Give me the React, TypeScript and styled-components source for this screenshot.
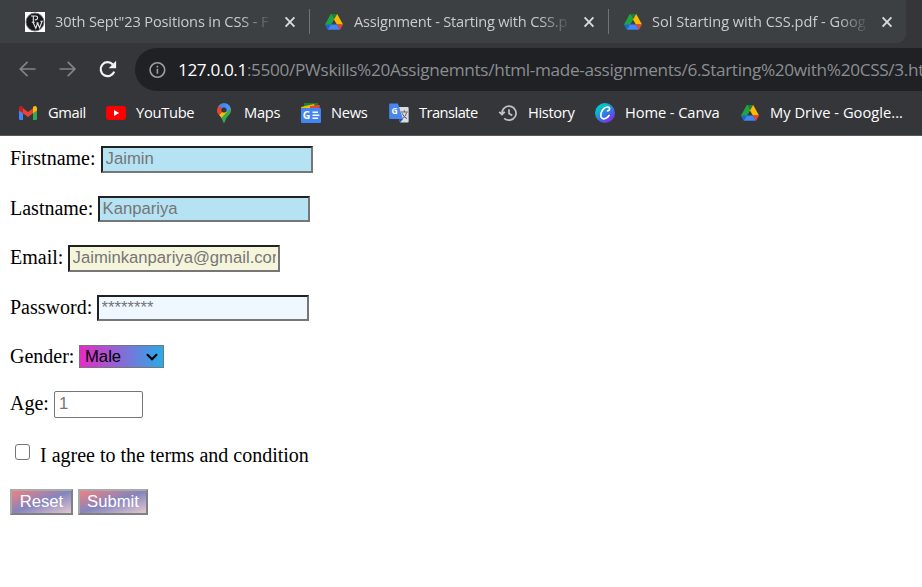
import React from "react";
import styled, { createGlobalStyle, css } from "styled-components";

const GlobalStyle = createGlobalStyle`
  * { box-sizing: border-box; }
  html, body { margin: 0; padding: 0; background: #fff; overflow: hidden; }
`;

const Window = styled.div`
  width: 922px;
  height: 587px;
  overflow: hidden;
  background: #fff;
`;

const Chrome = styled.header`
  height: 136px;
  background: #35363a;
  border-bottom: 1px solid #58595c;
  font-family: "Open Sans", "Noto Sans", sans-serif;
  overflow: hidden;
`;

const TabStrip = styled.div`
  display: flex;
  width: 906px;
  height: 43px;
  background: #3c4043;
  border-bottom-right-radius: 9px;
`;

const Tab = styled.div<{ $width: number; $pad: number; $divider?: boolean }>`
  display: flex;
  align-items: center;
  flex: none;
  width: ${(p) => p.$width}px;
  height: 43px;
  padding-left: ${(p) => p.$pad}px;
  ${(p) =>
    p.$divider &&
    css`
      background: linear-gradient(#707376, #707376) right 9px / 1px 25px no-repeat;
    `}
`;

const TabTitle = styled.span<{ $spacing: number; $gap: number }>`
  flex: none;
  width: 214px;
  margin-left: ${(p) => p.$gap}px;
  margin-right: 11px;
  padding-bottom: 1px;
  overflow: hidden;
  white-space: nowrap;
  font-size: 14.6px;
  line-height: 24px;
  letter-spacing: ${(p) => p.$spacing}px;
  color: #c9cccf;
  mask-image: linear-gradient(90deg, #000 185px, transparent 218px);
`;

const Toolbar = styled.div`
  display: flex;
  align-items: center;
  height: 53px;
  padding: 0 0 0 18px;
`;

const NavIcon = styled.svg`
  flex: none;
  width: 20px;
  height: 20px;
  margin-right: 20px;
  fill: none;
`;

const AddressBar = styled.div`
  display: flex;
  align-items: center;
  flex: none;
  width: 820px;
  height: 43px;
  margin-left: -3px;
  padding-left: 14px;
  border-radius: 22px;
  background: #202124;
`;

const Url = styled.span`
  margin-left: 9px;
  white-space: nowrap;
  font-size: 17.2px;
  line-height: 26px;
  letter-spacing: -0.33px;
  color: #8a8e92;
`;

const Host = styled.span`
  color: #fff;
  letter-spacing: -0.4px;
`;

const Bookmarks = styled.nav`
  display: flex;
  align-items: center;
  height: 34px;
  padding-left: 18px;
`;

const Bookmark = styled.div<{ $width: number }>`
  display: flex;
  align-items: center;
  flex: none;
  gap: 10px;
  width: ${(p) => p.$width}px;
`;

const BookmarkName = styled.span<{ $spacing: number }>`
  padding-bottom: 2px;
  font-size: 14.7px;
  line-height: 24px;
  letter-spacing: ${(p) => p.$spacing}px;
  white-space: nowrap;
  color: #fff;
`;

const Icon20 = styled.svg`
  flex: none;
  display: block;
  width: 20px;
  height: 20px;
`;

const Form = styled.form`
  padding: 10px 0 0 10px;
  font-family: "Liberation Serif", "Times New Roman", serif;
  font-size: 20px;
  color: #000;
`;

const Row = styled.div<{ $height: number }>`
  display: flex;
  align-items: flex-start;
  height: ${(p) => p.$height}px;
`;

const Label = styled.label<{ $width: number; $line?: number }>`
  flex: none;
  width: ${(p) => p.$width}px;
  line-height: ${(p) => p.$line ?? 24}px;
  white-space: nowrap;
`;

const controlFont = css`
  font-family: "Liberation Sans", Arial, sans-serif;
  font-size: 16.667px;
`;

const TextInput = styled.input<{ $bg: string; $height?: number }>`
  ${controlFont}
  width: 212px;
  height: ${(p) => p.$height ?? 26}px;
  margin: 0;
  padding: 0 2px 1px 2.6px;
  border: 2px solid;
  border-color: #212121 #767676 #767676 #212121;
  border-radius: 0;
  outline: none;
  background: ${(p) => p.$bg};
  &::placeholder { color: #757575; }
`;

const AgeInput = styled.input`
  ${controlFont}
  width: 89px;
  height: 27px;
  margin: 0;
  padding: 0 4px 1px;
  border: 1px solid #767676;
  border-radius: 2px;
  outline: none;
  &::placeholder { color: #757575; }
`;

const SelectBox = styled.div`
  display: grid;
  width: 85px;
  height: 23px;
  > * { grid-area: 1 / 1; }
`;

const Select = styled.select`
  ${controlFont}
  appearance: none;
  width: 85px;
  height: 23px;
  padding: 0 5px 1px;
  border: 1px solid #767676;
  border-radius: 0;
  background: linear-gradient(90deg, #e62bc5, #28abe8);
  color: #000;
`;

const Chevron = styled.svg`
  width: 12px;
  height: 8px;
  place-self: center end;
  margin-right: 6px;
  pointer-events: none;
`;

const Checkbox = styled.input`
  appearance: none;
  width: 15px;
  height: 16px;
  margin: 0 10px 0 5px;
  border: 1.5px solid #767676;
  border-radius: 3px;
  background: #fff;
`;

const Terms = styled.label`
  line-height: 22px;
`;

const Button = styled.button<{ $width: number }>`
  ${controlFont}
  width: ${(p) => p.$width}px;
  height: 26px;
  margin-right: 5px;
  padding: 0 0 1px;
  border: 2px solid;
  border-color: #a9a9a9 #808080 #808080 #a9a9a9;
  border-radius: 0;
  background: linear-gradient(to bottom right, #f08080, #8585bd 50%, #e3c8d0);
  color: #fff;
`;

const DriveIcon = () => (
  <Icon20 viewBox="0 0 20 20">
    <path d="M6.8 2h6.4l-3.1 5.5-3.3-5.5z" fill="#188038" />
    <path d="M6.8 2 1 12.5l3 5.3 6.2-10.3z" fill="#1ea446" />
    <path d="M13.2 2H6.8l6.1 10.5H19z" fill="#ffba00" />
    <path d="M6.8 2 10.1 7.5 13.2 2z" fill="#188038" />
    <path d="M7.1 12.5H1l3 5.3z" fill="#1967d2" />
    <path d="M7.1 12.5 4 17.8h12l-3.1-5.3z" fill="#4285f4" />
    <path d="M12.9 12.5H19l-3 5.3z" fill="#ea4335" />
  </Icon20>
);

const PwIcon = () => (
  <Icon20 viewBox="0 0 20 20">
    <path d="M0 0h20v20H0z" fill="#fff" />
    <circle cx="10" cy="10" r="9" fill="#15191c" stroke="#777" />
    <path d="M6 4h4.5c3.2 0 2.6 4.2-.8 3.8M8.3 4v6.2M6.8 10.2h3M8 10.2l2.8 6 1.8-5 2 4.6 2.4-6.3M11.3 11h2.4M15.3 9.3h2.6" fill="none" stroke="#e4e4e4" strokeWidth="1.1" />
  </Icon20>
);

const GmailIcon = () => (
  <Icon20 viewBox="0 0 20 20">
    <path d="M1 6h4v11H2.2Q1 17 1 15.8z" fill="#4285f4" />
    <path d="M15 6h4v9.8q0 1.2-1.2 1.2H15z" fill="#34a853" />
    <path d="M5 5.3 10 9l5-3.7v5L10 14l-5-3.7z" fill="#ea4335" />
    <path d="M1 5.3C1 3 3.4 2.4 5 4v6.3L1 7.4z" fill="#c5221f" />
    <path d="M19 5.3c0-2.3-2.4-2.9-4-1.3v6.3l4-2.9z" fill="#fbbc04" />
  </Icon20>
);

const YouTubeIcon = () => (
  <Icon20 viewBox="0 0 20 20">
    <rect y="3" width="20" height="14" rx="3.3" fill="#f00" />
    <path d="m8 7 5.2 3L8 13z" fill="#fff" />
  </Icon20>
);

const MapsIcon = () => (
  <Icon20 viewBox="0 0 20 20">
    <clipPath id="pin">
      <path d="M10 .3a6.8 6.8 0 0 0-6.8 6.9c0 4.8 4.6 5.7 5.9 11.2.4 1.6 1.4 1.6 1.8 0 1.3-5.5 5.9-6.4 5.9-11.2A6.8 6.8 0 0 0 10 .3z" />
    </clipPath>
    <g clipPath="url(#pin)">
      <path d="M0 0h20v20H0z" fill="#34a853" />
      <path d="M0 20V10l4 3 11.5-13H20v5L6 17z" fill="#fbbc04" />
      <path d="M12.5 9.5 18 3.5V20H7.2l-1-4z" fill="#34a853" />
      <path d="M0 0h5l5 7-6.5 7L0 10z" fill="#ea4335" />
      <path d="M4.7 2.5 8 0h9l-.6 4L10 7.3z" fill="#4285f4" />
      <path d="m12 0 8 4-7.5 5L10 7z" fill="#4a90f5" />
    </g>
    <circle cx="10" cy="7" r="2.6" fill="#35363a" />
  </Icon20>
);

const Letter = styled.text`
  font-family: "Open Sans", sans-serif;
  font-weight: 700;
`;

const NewsIcon = () => (
  <Icon20 viewBox="0 0 20 20">
    <path d="M3 0h14v7H3z" fill="#188038" />
    <path d="m0 4 13-3 2 7H1z" fill="#fbbc04" />
    <path d="m9 3 10-1-1 6H9z" fill="#ea4335" />
    <rect y="5" width="20" height="15" rx="1.3" fill="#4285f4" />
    <Letter x="1.7" y="15.9" fontSize="10.5" fill="#fff">G</Letter>
    <path d="M11.5 9.2H17M11.5 12.2h6.8M11.5 15.2H17" stroke="#fff" strokeWidth="1.6" />
  </Icon20>
);

const TranslateIcon = () => (
  <Icon20 viewBox="0 0 20 20">
    <path d="M8 4h10.6q1 0 1 1v13.4q0 1-1 1H11z" fill="#dadce0" />
    <path d="M12 9h6.8M15.4 7.2V9M13 10.2q1.7 4 5 5.5M17.7 9.5q-1 4.5-4.7 6.5" fill="none" stroke="#5f6368" strokeWidth="1" />
    <path d="M1.2.5h7.7L14 16H1.2q-1 0-1-1V1.5q0-1 1-1z" fill="#4a86ed" />
    <path d="M10 16h4l-2.8 3.5z" fill="#294fa8" />
    <Letter x="2.4" y="11" fontSize="8.5" fill="#fff">G</Letter>
  </Icon20>
);

const HistoryIcon = () => (
  <Icon20 viewBox="0 0 20 20" fill="none" stroke="#bfc2c6" strokeWidth="1.7">
    <path d="M4 10.2a7 7 0 1 1 2.2 5.1M1.2 8.8 4 11.5l2.8-2.7M11 6.2v4.4l3.3 2" />
  </Icon20>
);

const CanvaIcon = () => (
  <Icon20 viewBox="0 0 20 20">
    <linearGradient id="canva" x1=".15" y1=".1" x2=".8" y2=".95">
      <stop offset=".15" stopColor="#00c4cc" />
      <stop offset=".6" stopColor="#3a70e4" />
      <stop offset="1" stopColor="#8626ed" />
    </linearGradient>
    <circle cx="10" cy="10" r="10" fill="url(#canva)" />
    <path d="M12.6 7.8c2.8-.5 2.6-4-.4-3.8-3.4.2-6.4 4.4-6.4 8.2 0 5 5.6 4.5 8.3.2" fill="none" stroke="#fff" strokeWidth="1.7" strokeLinecap="round" />
  </Icon20>
);

const CloseIcon = () => (
  <Icon20 viewBox="0 0 20 20">
    <path d="m5.6 5.4 8.8 9.2m0-9.2-8.8 9.2" stroke="#d8dadc" strokeWidth="1.9" />
  </Icon20>
);

const bookmarks = [
  { name: "Gmail", icon: GmailIcon, width: 88, spacing: -0.4 },
  { name: "YouTube", icon: YouTubeIcon, width: 108, spacing: -0.3 },
  { name: "Maps", icon: MapsIcon, width: 87, spacing: -0.3 },
  { name: "News", icon: NewsIcon, width: 88, spacing: -0.3 },
  { name: "Translate", icon: TranslateIcon, width: 109, spacing: -0.55 },
  { name: "History", icon: HistoryIcon, width: 97, spacing: -0.35 },
  { name: "Home - Canva", icon: CanvaIcon, width: 145, spacing: -0.1 },
  { name: "My Drive - Google...", icon: DriveIcon, width: 180, spacing: 0.02 },
];

export default function App() {
  return (
    <Window>
      <GlobalStyle />
      <Chrome>
        <TabStrip>
          <Tab $width={310} $pad={25} $divider>
            <PwIcon />
            <TabTitle $gap={10} $spacing={-0.15}>30th Sept"23 Positions in CSS - F</TabTitle>
            <CloseIcon />
          </Tab>
          <Tab $width={299} $pad={14} $divider>
            <DriveIcon />
            <TabTitle $gap={10} $spacing={-0.2}>Assignment - Starting with CSS.pdf</TabTitle>
            <CloseIcon />
          </Tab>
          <Tab $width={297} $pad={14}>
            <DriveIcon />
            <TabTitle $gap={9} $spacing={-0.02}>Sol Starting with CSS.pdf - Goog</TabTitle>
            <CloseIcon />
          </Tab>
        </TabStrip>
        <Toolbar>
          <NavIcon viewBox="0 0 20 20" stroke="#828487" strokeWidth="1.7">
            <path d="M17.5 9H2.5M9.5 1.8 2.3 9l7.2 7.2" />
          </NavIcon>
          <NavIcon viewBox="0 0 20 20" stroke="#828487" strokeWidth="1.7">
            <path d="M1.5 9h15M9.7 1.8l7.2 7.2-7.2 7.2" />
          </NavIcon>
          <NavIcon viewBox="0 0 20 20" stroke="#f1f3f4" strokeWidth="2.2">
            <path d="M16.2 11.7A7 7 0 1 1 14.8 4.4" />
            <path d="M18.1.8v7.4h-7.4z" fill="#f1f3f4" stroke="none" />
          </NavIcon>
          <AddressBar>
            <Icon20 viewBox="0 0 20 20" fill="none" stroke="#9aa0a6" strokeWidth="1.6">
              <circle cx="8.4" cy="10" r="7.3" />
              <path d="M8.4 8.8v5M8.4 5.7v1.7" />
            </Icon20>
            <Url>
              <Host>127.0.0.1</Host>
              :5500/PWskills%20Assignemnts/html-made-assignments/6.Starting%20with%20CSS/3.html
            </Url>
          </AddressBar>
        </Toolbar>
        <Bookmarks>
          {bookmarks.map(({ name, icon: BookmarkIcon, width, spacing }) => (
            <Bookmark key={name} $width={width}>
              <BookmarkIcon />
              <BookmarkName $spacing={spacing}>{name}</BookmarkName>
            </Bookmark>
          ))}
        </Bookmarks>
      </Chrome>
      <Form onSubmit={(e: React.FormEvent) => e.preventDefault()}>
        <Row $height={50}>
          <Label htmlFor="first" $width={91}>Firstname:</Label>
          <TextInput id="first" placeholder="Jaimin" $bg="#b6e3f3" $height={27} />
        </Row>
        <Row $height={49}>
          <Label htmlFor="last" $width={88}>Lastname:</Label>
          <TextInput id="last" placeholder="Kanpariya" $bg="#b6e3f3" />
        </Row>
        <Row $height={50}>
          <Label htmlFor="email" $width={58}>Email:</Label>
          <TextInput id="email" placeholder="Jaiminkanpariya@gmail.com" $bg="#f5f5dc" $height={27} />
        </Row>
        <Row $height={50}>
          <Label htmlFor="password" $width={87}>Password:</Label>
          <TextInput id="password" type="password" placeholder="********" $bg="#f0f8ff" />
        </Row>
        <Row $height={46}>
          <Label htmlFor="gender" $width={69} $line={22}>Gender:</Label>
          <SelectBox>
            <Select id="gender" defaultValue="Male">
              <option>Male</option>
              <option>Female</option>
            </Select>
            <Chevron viewBox="0 0 12 8">
              <path d="m1 1.3 5 5 5-5" fill="none" stroke="#000" strokeWidth="2.2" />
            </Chevron>
          </SelectBox>
        </Row>
        <Row $height={53}>
          <Label htmlFor="age" $width={44}>Age:</Label>
          <AgeInput id="age" placeholder="1" />
        </Row>
        <Row $height={45}>
          <Checkbox id="terms" type="checkbox" />
          <Terms htmlFor="terms">I agree to the terms and condition</Terms>
        </Row>
        <Row $height={26}>
          <Button type="reset" $width={63}>Reset</Button>
          <Button type="submit" $width={70}>Submit</Button>
        </Row>
      </Form>
    </Window>
  );
}
